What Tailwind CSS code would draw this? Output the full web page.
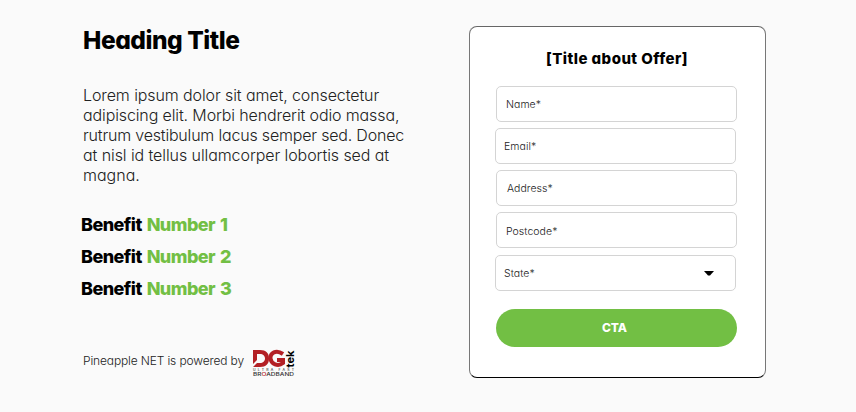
<!DOCTYPE html>
<html lang="en">
<head>
<meta charset="utf-8">
<title>Offer</title>
<script src="https://cdn.jsdelivr.net/npm/@tailwindcss/browser@4"></script>
</head>
<body class="h-[412px] w-[856px] overflow-hidden bg-[#fafafa] font-[Inter,sans-serif] text-black [font-feature-settings:'cv11'] whitespace-nowrap">
<main class="flex">
  <section class="w-[469px] pt-[24px] pl-[82px]">
    <h1 class="ml-px text-[24.5px] leading-8 font-extrabold tracking-[-0.45px]">Heading Title</h1>
    <p class="mt-[29px] ml-px flex flex-col items-start text-[16px] leading-5 font-light text-[#222]">
      <span class="tracking-[-0.1px]">Lorem ipsum dolor sit amet, consectetur</span>
      <span class="tracking-[-0.12px]">adipiscing elit. Morbi hendrerit odio massa,</span>
      <span class="tracking-[-0.19px]">rutrum vestibulum lacus semper sed. Donec</span>
      <span class="tracking-[-0.08px]">at nisl id tellus ullamcorper lobortis sed at</span>
      <span>magna.</span>
    </p>
    <ul class="mt-[24px] -ml-px text-[18px] leading-8 font-extrabold tracking-[-0.55px] [word-spacing:1.5px]">
      <li>Benefit <span class="text-[#72bf44]">Number 1</span></li>
      <li>Benefit <span class="text-[#72bf44]">Number 2</span></li>
      <li>Benefit <span class="text-[#72bf44]">Number 3</span></li>
    </ul>
    <div class="mt-[43px] flex">
      <span class="w-[170px] pt-[3px] pl-px text-[12px] leading-5 font-light tracking-[-0.14px] text-[#222]">Pineapple NET is powered by</span>
      <svg class="h-[30px] w-[44px]" viewBox="0 0 44 30" font-family="Inter,sans-serif">
        <path fill="#b32025" fill-rule="evenodd" d="M1 2H8C14 2 17 5 17 10.500S14 19 8 19H1L5 15H8C11 15 13 13 13 10.500S11 6 8 6H5V12L1 16Z"/>
        <path fill="none" stroke="#b32025" stroke-width="4" d="M31 6C24 1 18 5 18.500 10.500S26 19 31 15V12H25"/>
        <text transform="translate(41.500 19.500) rotate(-90)" font-size="11" font-weight="700" textLength="17" lengthAdjust="spacingAndGlyphs">tek</text>
        <text x="1" y="23" font-size="3.500" font-weight="500" fill="#333" textLength="41">ULTRA FAST</text>
        <text x="1" y="28" font-size="5" font-weight="500" fill="#333" textLength="41" lengthAdjust="spacingAndGlyphs">BR<tspan fill="#b32025">O</tspan>ADBAND</text>
      </svg>
    </div>
  </section>
  <form class="mt-[26px] h-[352px] w-[297px] rounded-[8px] border border-[#777] border-t-[#666] border-b-black bg-white px-[25px] pt-[22px]">
    <h2 class="pr-px text-center text-[15px] leading-5 font-extrabold tracking-[0.45px]">[Title about Offer]</h2>
    <div class="mt-[17px] flex flex-col gap-[6px] text-[10.5px] font-light tracking-[0.05px] text-[#222]">
      <label class="ml-px flex h-9 w-[241px] items-center rounded-[5px] border border-[#d4d4d4] pt-px pl-[9px]">Name*</label>
      <label class="flex h-9 w-[241px] items-center rounded-[5px] border border-[#d4d4d4] pt-[2px] pl-[8px]">Email*</label>
      <label class="ml-px flex h-9 w-[241px] items-center rounded-[5px] border border-[#d4d4d4] pt-px pl-[10px]">Address*</label>
      <label class="ml-px flex h-9 w-[241px] items-center rounded-[5px] border border-[#d4d4d4] pt-[3px] pl-[9px]">Postcode*</label>
      <label class="mt-px flex h-9 w-[241px] items-center justify-between rounded-[5px] border border-[#d4d4d4] pt-px pr-[21px] pl-[8px]">State*
        <svg class="h-[5px] w-[10px]" viewBox="0 0 10 5"><path d="M0 0H10L6 4.500H4Z"/></svg>
      </label>
    </div>
    <button type="button" class="mt-[18px] ml-px h-[38px] w-[241px] rounded-full bg-[#72bf44] pr-[4px] text-[12px] font-extrabold tracking-[-0.1px] text-white">CTA</button>
  </form>
</main>
</body>
</html>
